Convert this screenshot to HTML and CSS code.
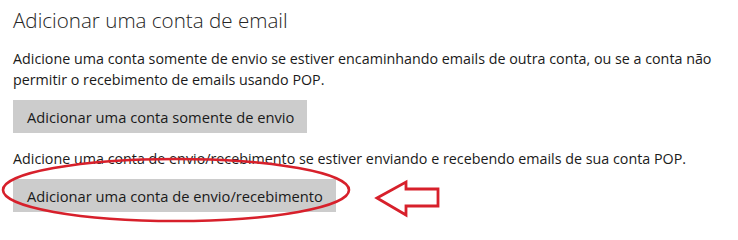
FILE: index.html
```html
<!DOCTYPE html>
<html lang="pt">
<head>
<meta charset="utf-8">
<link rel="stylesheet" href="styles.css">
</head>
<body>
<main class="panel">
  <h1 class="title">Adicionar uma conta de email</h1>
  <p class="desc">Adicione uma conta somente de envio se estiver encaminhando emails de outra conta, ou se a conta não permitir o recebimento de emails usando POP.</p>
  <button class="btn btn-send">Adicionar uma conta somente de envio</button>
  <p class="desc desc-second">Adicione uma conta de envio/recebimento se estiver enviando e recebendo emails de sua conta POP.</p>
  <button class="btn btn-both">Adicionar uma conta de envio/recebimento</button>
</main>
<svg class="markup" width="738" height="226" viewBox="0 0 738 226" aria-hidden="true">
  <ellipse cx="176" cy="190" rx="173" ry="31" fill="none" stroke="#d7202b" stroke-width="2.6"/>
  <polygon points="377,198 406,182 406,189 438,189 438,206 406,206 406,215" fill="none" stroke="#d7202b" stroke-width="2.8" stroke-linejoin="miter"/>
</svg>
</body>
</html>
```
FILE: styles.css
```css
html, body {
  margin: 0;
  padding: 0;
  background: #ffffff;
}
body {
  width: 738px;
  height: 226px;
  overflow: hidden;
  position: relative;
  font-family: "Open Sans", "Noto Sans", sans-serif;
  color: #1a1a1a;
}
.panel {
  display: flex;
  flex-direction: column;
  align-items: flex-start;
  padding: 5px 0 0 13px;
}
.title {
  margin: 0;
  font-weight: 300;
  font-size: 20.6px;
  line-height: 30px;
  color: #262626;
}
.desc {
  margin: 13px 0 0 0;
  font-size: 14.3px;
  line-height: 21px;
  width: 715px;
}
.desc-second {
  margin-top: 15px;
}
.btn {
  margin-top: 10px;
  border: none;
  background: #cccccc;
  font-family: inherit;
  font-size: 14.7px;
  color: #1a1a1a;
  height: 33px;
  padding: 0 13px 0 14px;
}
.markup {
  position: absolute;
  left: 0;
  top: 0;
  pointer-events: none;
}
```
